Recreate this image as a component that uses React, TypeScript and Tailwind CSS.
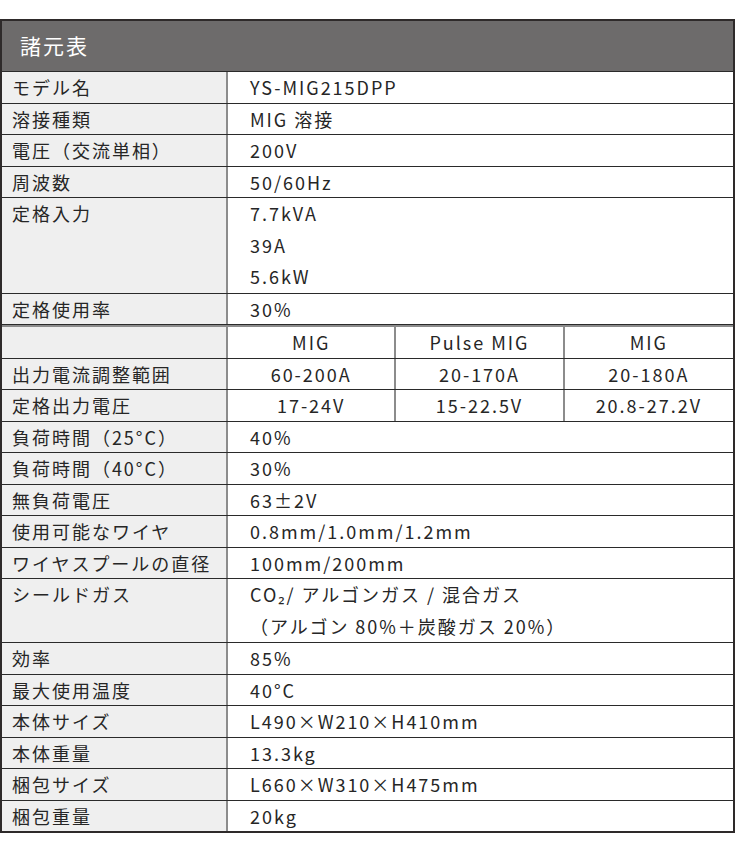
const rows: { label: string; values?: string[]; sub?: string[] }[] = [
  { label: "モデル名", values: ["YS-MIG215DPP"] },
  { label: "溶接種類", values: ["MIG 溶接"] },
  { label: "電圧（交流単相）", values: ["200V"] },
  { label: "周波数", values: ["50/60Hz"] },
  { label: "定格入力", values: ["7.7kVA", "39A", "5.6kW"] },
  { label: "定格使用率", values: ["30%"] },
  { label: "", sub: ["MIG", "Pulse MIG", "MIG"] },
  { label: "出力電流調整範囲", sub: ["60-200A", "20-170A", "20-180A"] },
  { label: "定格出力電圧", sub: ["17-24V", "15-22.5V", "20.8-27.2V"] },
  { label: "負荷時間（25°C）", values: ["40%"] },
  { label: "負荷時間（40°C）", values: ["30%"] },
  { label: "無負荷電圧", values: ["63±2V"] },
  { label: "使用可能なワイヤ", values: ["0.8mm/1.0mm/1.2mm"] },
  { label: "ワイヤスプールの直径", values: ["100mm/200mm"] },
  { label: "シールドガス", values: ["CO₂/ アルゴンガス / 混合ガス", "（アルゴン 80%＋炭酸ガス 20%）"] },
  { label: "効率", values: ["85%"] },
  { label: "最大使用温度", values: ["40°C"] },
  { label: "本体サイズ", values: ["L490×W210×H410mm"] },
  { label: "本体重量", values: ["13.3kg"] },
  { label: "梱包サイズ", values: ["L660×W310×H475mm"] },
  { label: "梱包重量", values: ["20kg"] },
];

const SpecRow = ({ row, last }: { row: (typeof rows)[number]; last: boolean }) => {
  const multi = (row.values?.length ?? 1) > 1;
  const lead = multi ? "leading-[31.5px]" : "leading-[30.5px]";
  return (
    <div
      className={`flex ${last ? "" : "border-b border-[#2a2a2a]"} ${
        row.label === "" ? "border-t-2 border-t-[#8c8c8c]" : ""
      }`}
    >
      <div className={`w-[226px] shrink-0 bg-[#efefef] border-r-2 border-[#8c8c8c] pl-[10px] ${lead}`}>
        {row.label}
      </div>
      {row.sub ? (
        <div className="flex-1 grid grid-cols-3 leading-[30.5px] text-center">
          {row.sub.map((v, i) => (
            <div key={i} className={i < 2 ? "border-r-2 border-[#8c8c8c]" : ""}>
              {v}
            </div>
          ))}
        </div>
      ) : (
        <div className={`flex-1 pl-[22px] ${lead}`}>
          {row.values!.map((v, i) => (
            <div key={i}>{v}</div>
          ))}
        </div>
      )}
    </div>
  );
};

export default function App() {
  return (
    <div className="w-[735px] h-[847px] bg-white pt-[19px] font-['Noto_Sans_CJK_JP','Noto_Sans',sans-serif] text-[#262626] text-[18px] tracking-[0.11em]">
      <div className="border-2 border-[#2e2a2a]">
        <div className="bg-[#6d6b6b] text-white text-[21px] h-[51px] flex items-center pl-[18px] border-b border-[#2a2a2a]">
          諸元表
        </div>
        {rows.map((row, i) => (
          <SpecRow key={i} row={row} last={i === rows.length - 1} />
        ))}
      </div>
    </div>
  );
}
